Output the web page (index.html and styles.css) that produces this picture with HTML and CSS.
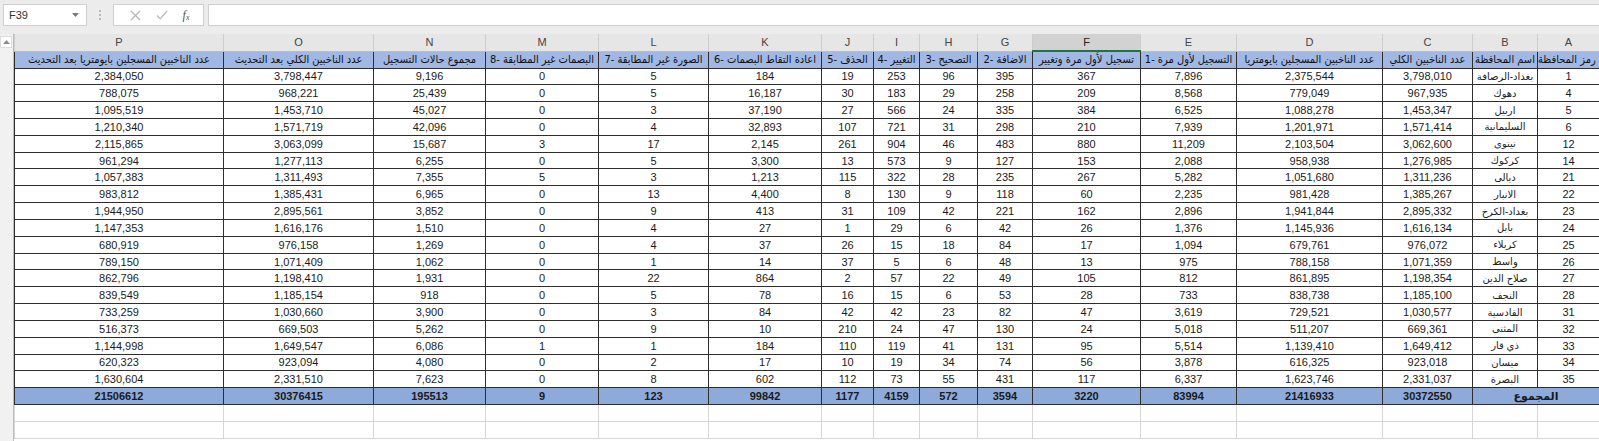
FILE: index.html
```html
<!DOCTYPE html>
<html lang="ar">
<head>
<meta charset="utf-8">
<title>ورقة العمل</title>
<link rel="stylesheet" href="styles.css">
</head>
<body>
<div class="formula-bar">
  <div class="name-box"><span>F39</span><svg class="dd" width="7" height="4" viewBox="0 0 7 4"><path d="M0 0h7L3.5 4z" fill="#7a7a7a"/></svg></div>
  <div class="grip"><i></i><i></i><i></i></div>
  <div class="fx-buttons">
    <svg width="11" height="11" viewBox="0 0 11 11"><path d="M1 1L10 10M10 1L1 10" stroke="#b4b4b4" stroke-width="1.2" fill="none"/></svg>
    <svg width="12" height="10" viewBox="0 0 12 10"><path d="M1 5.5L4.2 8.8L11 1" stroke="#b4b4b4" stroke-width="1.2" fill="none"/></svg>
    <span class="fx">f<sub>x</sub></span>
  </div>
  <div class="formula-input"></div>
</div>

<div class="sheet">
  <div class="vscroll"><div class="vs-btn"><svg width="7" height="4" viewBox="0 0 7 4"><path d="M0 4h7L3.5 0z" fill="#8a8a8a"/></svg></div></div>
  <div class="grid-wrap">
    <table class="grid" dir="rtl">
      <colgroup>
        <col class="c-a"><col class="c-b"><col class="c-c"><col class="c-d"><col class="c-e"><col class="c-f"><col class="c-g"><col class="c-h"><col class="c-i"><col class="c-j"><col class="c-k"><col class="c-l"><col class="c-m"><col class="c-n"><col class="c-o"><col class="c-p">
      </colgroup>
      <thead>
        <tr class="letters">
          <th>A</th><th>B</th><th>C</th><th>D</th><th>E</th><th class="sel">F</th><th>G</th><th>H</th><th>I</th><th>J</th><th>K</th><th>L</th><th>M</th><th>N</th><th>O</th><th>P</th>
        </tr>
      </thead>
      <tbody>
        <tr class="head">
          <td class="overflow-a"><div><span>رمز المحافظة</span></div></td>
          <td>اسم المحافظة</td>
          <td>عدد الناخبين الكلي</td>
          <td>عدد الناخبين المسجلين بايومتريا</td>
          <td>التسجيل لأول مرة -1</td>
          <td>تسجيل لأول مرة وتغيير</td>
          <td>الاضافة -2</td>
          <td>التصحيح -3</td>
          <td>التغيير -4</td>
          <td>الحذف -5</td>
          <td>اعادة التقاط البصمات -6</td>
          <td>الصورة غير المطابقة -7</td>
          <td>البصمات غير المطابقة -8</td>
          <td>مجموع حالات التسجيل</td>
          <td>عدد الناخبين الكلي بعد التحديث</td>
          <td>عدد الناخبين المسجلين بايومتريا بعد التحديث</td>
        </tr>
        <tr><td>1</td><td class="name">بغداد-الرصافة</td><td>3,798,010</td><td>2,375,544</td><td>7,896</td><td>367</td><td>395</td><td>96</td><td>253</td><td>19</td><td>184</td><td>5</td><td>0</td><td>9,196</td><td>3,798,447</td><td>2,384,050</td></tr>
        <tr><td>4</td><td class="name">دهوك</td><td>967,935</td><td>779,049</td><td>8,568</td><td>209</td><td>258</td><td>29</td><td>183</td><td>30</td><td>16,187</td><td>5</td><td>0</td><td>25,439</td><td>968,221</td><td>788,075</td></tr>
        <tr><td>5</td><td class="name">اربيل</td><td>1,453,347</td><td>1,088,278</td><td>6,525</td><td>384</td><td>335</td><td>24</td><td>566</td><td>27</td><td>37,190</td><td>3</td><td>0</td><td>45,027</td><td>1,453,710</td><td>1,095,519</td></tr>
        <tr><td>6</td><td class="name">السليمانية</td><td>1,571,414</td><td>1,201,971</td><td>7,939</td><td>210</td><td>298</td><td>31</td><td>721</td><td>107</td><td>32,893</td><td>4</td><td>0</td><td>42,096</td><td>1,571,719</td><td>1,210,340</td></tr>
        <tr><td>12</td><td class="name">نينوى</td><td>3,062,600</td><td>2,103,504</td><td>11,209</td><td>880</td><td>483</td><td>46</td><td>904</td><td>261</td><td>2,145</td><td>17</td><td>3</td><td>15,687</td><td>3,063,099</td><td>2,115,865</td></tr>
        <tr><td>14</td><td class="name">كركوك</td><td>1,276,985</td><td>958,938</td><td>2,088</td><td>153</td><td>127</td><td>9</td><td>573</td><td>13</td><td>3,300</td><td>5</td><td>0</td><td>6,255</td><td>1,277,113</td><td>961,294</td></tr>
        <tr><td>21</td><td class="name">ديالى</td><td>1,311,236</td><td>1,051,680</td><td>5,282</td><td>267</td><td>235</td><td>28</td><td>322</td><td>115</td><td>1,213</td><td>3</td><td>5</td><td>7,355</td><td>1,311,493</td><td>1,057,383</td></tr>
        <tr><td>22</td><td class="name">الانبار</td><td>1,385,267</td><td>981,428</td><td>2,235</td><td>60</td><td>118</td><td>9</td><td>130</td><td>8</td><td>4,400</td><td>13</td><td>0</td><td>6,965</td><td>1,385,431</td><td>983,812</td></tr>
        <tr><td>23</td><td class="name">بغداد-الكرخ</td><td>2,895,332</td><td>1,941,844</td><td>2,896</td><td>162</td><td>221</td><td>42</td><td>109</td><td>31</td><td>413</td><td>9</td><td>0</td><td>3,852</td><td>2,895,561</td><td>1,944,950</td></tr>
        <tr><td>24</td><td class="name">بابل</td><td>1,616,134</td><td>1,145,936</td><td>1,376</td><td>26</td><td>42</td><td>6</td><td>29</td><td>1</td><td>27</td><td>4</td><td>0</td><td>1,510</td><td>1,616,176</td><td>1,147,353</td></tr>
        <tr><td>25</td><td class="name">كربلاء</td><td>976,072</td><td>679,761</td><td>1,094</td><td>17</td><td>84</td><td>18</td><td>15</td><td>26</td><td>37</td><td>4</td><td>0</td><td>1,269</td><td>976,158</td><td>680,919</td></tr>
        <tr><td>26</td><td class="name">واسط</td><td>1,071,359</td><td>788,158</td><td>975</td><td>13</td><td>48</td><td>6</td><td>5</td><td>37</td><td>14</td><td>1</td><td>0</td><td>1,062</td><td>1,071,409</td><td>789,150</td></tr>
        <tr><td>27</td><td class="name">صلاح الدين</td><td>1,198,354</td><td>861,895</td><td>812</td><td>105</td><td>49</td><td>22</td><td>57</td><td>2</td><td>864</td><td>22</td><td>0</td><td>1,931</td><td>1,198,410</td><td>862,796</td></tr>
        <tr><td>28</td><td class="name">النجف</td><td>1,185,100</td><td>838,738</td><td>733</td><td>28</td><td>53</td><td>6</td><td>15</td><td>16</td><td>78</td><td>5</td><td>0</td><td>918</td><td>1,185,154</td><td>839,549</td></tr>
        <tr><td>31</td><td class="name">القادسية</td><td>1,030,577</td><td>729,521</td><td>3,619</td><td>47</td><td>82</td><td>23</td><td>42</td><td>42</td><td>84</td><td>3</td><td>0</td><td>3,900</td><td>1,030,660</td><td>733,259</td></tr>
        <tr><td>32</td><td class="name">المثنى</td><td>669,361</td><td>511,207</td><td>5,018</td><td>24</td><td>130</td><td>47</td><td>24</td><td>210</td><td>10</td><td>9</td><td>0</td><td>5,262</td><td>669,503</td><td>516,373</td></tr>
        <tr><td>33</td><td class="name">ذي قار</td><td>1,649,412</td><td>1,139,410</td><td>5,514</td><td>95</td><td>131</td><td>41</td><td>119</td><td>110</td><td>184</td><td>1</td><td>1</td><td>6,086</td><td>1,649,547</td><td>1,144,998</td></tr>
        <tr><td>34</td><td class="name">ميسان</td><td>923,018</td><td>616,325</td><td>3,878</td><td>56</td><td>74</td><td>34</td><td>19</td><td>10</td><td>17</td><td>2</td><td>0</td><td>4,080</td><td>923,094</td><td>620,323</td></tr>
        <tr><td>35</td><td class="name">البصرة</td><td>2,331,037</td><td>1,623,746</td><td>6,337</td><td>117</td><td>431</td><td>55</td><td>73</td><td>112</td><td>602</td><td>8</td><td>0</td><td>7,623</td><td>2,331,510</td><td>1,630,604</td></tr>
        <tr class="total"><td colspan="2">المجموع</td><td>30372550</td><td>21416933</td><td>83994</td><td>3220</td><td>3594</td><td>572</td><td>4159</td><td>1177</td><td>99842</td><td>123</td><td>9</td><td>195513</td><td>30376415</td><td>21506612</td></tr>
        <tr class="empty"><td></td><td></td><td></td><td></td><td></td><td></td><td></td><td></td><td></td><td></td><td></td><td></td><td></td><td></td><td></td><td></td></tr>
        <tr class="empty"><td></td><td></td><td></td><td></td><td></td><td></td><td></td><td></td><td></td><td></td><td></td><td></td><td></td><td></td><td></td><td></td></tr>
      </tbody>
    </table>
  </div>
</div>
</body>
</html>
```

FILE: styles.css
```css
* { box-sizing: border-box; }

html, body {
  margin: 0;
  padding: 0;
}

body {
  width: 1599px;
  height: 441px;
  overflow: hidden;
  background: #ffffff;
  font-family: "Liberation Sans", "DejaVu Sans", sans-serif;
  font-size: 11px;
  color: #1a1a1a;
}

/* ---------- formula bar ---------- */
.formula-bar {
  display: flex;
  align-items: center;
  height: 34px;
  padding: 4px 0 8px 3px;
  background: #ececec;
}

.name-box {
  display: flex;
  align-items: center;
  justify-content: space-between;
  width: 84px;
  height: 22px;
  padding: 0 7px 0 5px;
  background: #ffffff;
  border: 1px solid #cfcfcf;
  color: #333333;
  font-size: 11px;
}

.grip {
  display: flex;
  flex-direction: column;
  align-items: center;
  justify-content: center;
  gap: 2px;
  width: 26px;
  height: 22px;
}

.grip i {
  display: block;
  width: 2px;
  height: 2px;
  background: #b9b9b9;
}

.fx-buttons {
  display: flex;
  align-items: center;
  justify-content: space-around;
  width: 91px;
  height: 22px;
  padding: 0 6px 0 8px;
  background: #ffffff;
  border: 1px solid #cfcfcf;
}

.fx {
  font-family: "Liberation Serif", serif;
  font-style: italic;
  font-size: 12px;
  color: #555555;
}

.fx sub {
  font-size: 8px;
  vertical-align: -1px;
}

.formula-input {
  flex: 1;
  height: 22px;
  margin-left: 4px;
  background: #ffffff;
  border: 1px solid #cfcfcf;
  border-right: none;
}

/* ---------- sheet ---------- */
.sheet {
  display: flex;
  height: 407px;
}

.vscroll {
  width: 14px;
  flex: none;
  background: #f1f1f1;
  border-right: 1px solid #bdbdbd;
  padding-top: 2px;
}

.vs-btn {
  display: flex;
  align-items: center;
  justify-content: center;
  width: 12px;
  height: 12px;
  background: #ffffff;
  border: 1px solid #dcdcdc;
}

.grid-wrap {
  flex: 1;
  overflow: hidden;
}

.grid {
  width: 1585px;
  table-layout: fixed;
  border-collapse: collapse;
}

.c-a { width: 62px; }
.c-b { width: 65px; }
.c-c { width: 90px; }
.c-d { width: 146px; }
.c-e { width: 96px; }
.c-f { width: 108px; }
.c-g { width: 55px; }
.c-h { width: 58px; }
.c-i { width: 46px; }
.c-j { width: 52px; }
.c-k { width: 113px; }
.c-l { width: 110px; }
.c-m { width: 113px; }
.c-n { width: 112px; }
.c-o { width: 150px; }
.c-p { width: 209px; }

.grid th,
.grid td {
  padding: 0;
  text-align: center;
  vertical-align: middle;
  white-space: nowrap;
  overflow: hidden;
}

.letters th {
  height: 17px;
  background: #e6e6e6;
  border-left: 1px solid #cdcdcd;
  border-right: 1px solid #cdcdcd;
  border-bottom: 1px solid #bdbdbd;
  color: #444444;
  font-weight: normal;
  font-size: 11px;
}

.letters th.sel {
  background: #d2d2d2;
  border-bottom: 2px solid #217346;
  color: #222222;
}

.grid tbody tr {
  height: 16.84px;
}

.grid tbody td {
  border: 1px solid #2e2e2e;
  font-size: 11px;
}

.grid tbody tr.head {
  height: 17px;
}

.head td {
  background: #a0b8e3;
  border-top: 1px dashed #3d4f73;
  border-bottom: 1px dashed #3d4f73;
  font-family: "DejaVu Sans Condensed", "DejaVu Sans", sans-serif;
  font-size: 11.5px;
  color: #111111;
}

.head td.overflow-a {
  overflow: hidden;
}

.overflow-a div {
  direction: ltr;
  text-align: left;
  white-space: nowrap;
  overflow: hidden;
}

.overflow-a span {
  direction: rtl;
  unicode-bidi: isolate;
}

.grid td.name {
  font-size: 10px;
  color: #222222;
}

.total td {
  background: #8eaadb;
  font-weight: bold;
  border-bottom: 1px solid #2e2e2e;
}

.grid tbody tr.empty td {
  border: 1px solid #d6d6d6;
  border-top: none;
}
```
